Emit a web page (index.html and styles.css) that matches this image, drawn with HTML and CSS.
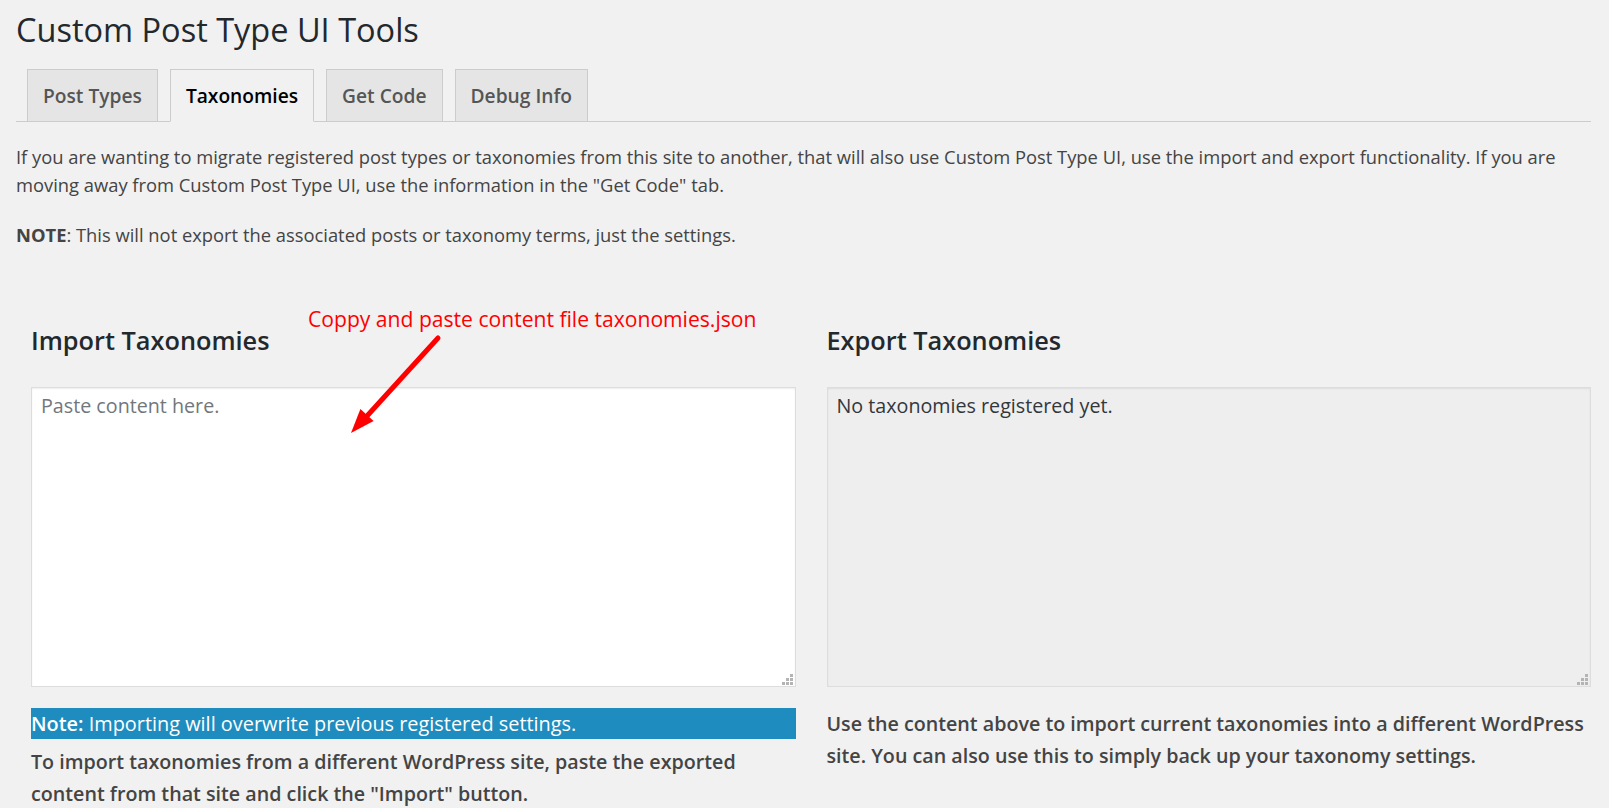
FILE: index.html
```html
<!DOCTYPE html>
<html lang="en">
<head>
<meta charset="utf-8">
<title>Custom Post Type UI Tools</title>
<link rel="stylesheet" href="styles.css">
</head>
<body>
<div class="wrap">
  <h1 class="page-title">Custom Post Type UI Tools</h1>
  <nav class="tabs">
    <a class="tab" href="#">Post Types</a>
    <a class="tab tab-active" href="#">Taxonomies</a>
    <a class="tab" href="#">Get Code</a>
    <a class="tab" href="#">Debug Info</a>
  </nav>
  <div class="intro">
    <p>If you are wanting to migrate registered post types or taxonomies from this site to another, that will also use Custom Post Type UI, use the import and export functionality. If you are moving away from Custom Post Type UI, use the information in the "Get Code" tab.</p>
    <p><strong>NOTE</strong>: This will not export the associated posts or taxonomy terms, just the settings.</p>
  </div>
  <div class="cols">
    <div class="col">
      <h2 class="col-title">Import Taxonomies</h2>
      <div class="field">
        <textarea class="box" placeholder="Paste content here."></textarea>
        <svg class="grip" width="11" height="11" viewBox="0 0 11 11"><rect x="8" y="0" width="3" height="3"/><rect x="4" y="4" width="3" height="3"/><rect x="8" y="4" width="3" height="3"/><rect x="0" y="8" width="3" height="3"/><rect x="4" y="8" width="3" height="3"/><rect x="8" y="8" width="3" height="3"/></svg>
      </div>
      <p class="highlight"><strong>Note:</strong> Importing will overwrite previous registered settings.</p>
      <p class="desc desc-import"><strong>To import taxonomies from a different WordPress site, paste the exported content from that site and click the "Import" button.</strong></p>
    </div>
    <div class="col">
      <h2 class="col-title">Export Taxonomies</h2>
      <div class="field">
        <textarea class="box box-readonly" readonly>No taxonomies registered yet.</textarea>
        <svg class="grip" width="11" height="11" viewBox="0 0 11 11"><rect x="8" y="0" width="3" height="3"/><rect x="4" y="4" width="3" height="3"/><rect x="8" y="4" width="3" height="3"/><rect x="0" y="8" width="3" height="3"/><rect x="4" y="8" width="3" height="3"/><rect x="8" y="8" width="3" height="3"/></svg>
      </div>
      <p class="desc desc-export"><strong>Use the content above to import current taxonomies into a different WordPress site. You can also use this to simply back up your taxonomy settings.</strong></p>
    </div>
  </div>
  <div class="annotation">Coppy and paste content file taxonomies.json</div>
  <svg class="arrow" width="110" height="110" viewBox="0 0 110 110">
    <line x1="98" y1="8" x2="27" y2="86" stroke="#ff0000" stroke-width="5" stroke-linecap="round"/>
    <polygon points="11,103 33.6,91 20.4,79" fill="#ff0000"/>
  </svg>
</div>
</body>
</html>
```
FILE: styles.css
```css
* { box-sizing: border-box; }

html, body {
  margin: 0;
  padding: 0;
  background: #f1f1f1;
}

body {
  font-family: "Open Sans", "Noto Sans", sans-serif;
  color: #444;
  font-size: 18.35px;
}

.wrap {
  position: relative;
  padding: 10px 18px 0 16px;
  min-height: 808px;
}

.page-title {
  margin: 0;
  font-size: 32.5px;
  line-height: 40px;
  font-weight: 400;
  color: #23282d;
}

.tabs {
  display: flex;
  gap: 12px;
  margin-top: 19px;
  padding-left: 11px;
  border-bottom: 1px solid #ccc;
}

.tab {
  display: flex;
  align-items: center;
  height: 53px;
  margin-bottom: -1px;
  padding: 0 15px;
  border: 1px solid #ccc;
  background: #e5e5e5;
  color: #555;
  font-size: 19.2px;
  font-weight: 600;
  text-decoration: none;
}

.tab-active {
  background: #f1f1f1;
  border-bottom-color: #f1f1f1;
  color: #000;
}

.intro p {
  margin: 20.6px 0;
  line-height: 28.7px;
}

.intro strong { font-weight: 700; }

.cols {
  display: grid;
  grid-template-columns: 1fr 1fr;
  column-gap: 31px;
  margin-top: 75.6px;
  padding-left: 15px;
}

.col-title {
  margin: 0 0 31px;
  font-size: 25.3px;
  line-height: 31px;
  font-weight: 600;
  color: #23282d;
}

.field {
  position: relative;
}

.box {
  display: block;
  width: 100%;
  height: 300px;
  margin: 0;
  padding: 4px 9px;
  border: 1px solid #ddd;
  box-shadow: inset 0 1px 2px rgba(0, 0, 0, 0.07);
  background: #fff;
  color: #32373c;
  font-family: "Open Sans", "Noto Sans", sans-serif;
  font-size: 19.7px;
  line-height: 28px;
  resize: none;
  outline: none;
}

.box::placeholder { color: #72777c; }

.box-readonly { background: #eee; }

.grip {
  position: absolute;
  right: 3px;
  bottom: 2px;
  fill: #b4b4b4;
}

.highlight {
  margin: 21px 0 0;
  background: #1e8cbe;
  color: #fff;
  font-size: 19.9px;
  line-height: 31px;
}

.highlight strong { font-weight: 600; }

.desc {
  font-size: 19.7px;
  line-height: 32px;
  color: #444;
}

.desc strong { font-weight: 600; }

.desc-import { margin: 7px 0 0; }

.desc-export { margin: 21px 0 0; }

.annotation {
  position: absolute;
  left: 308px;
  top: 306px;
  color: #ff0000;
  font-size: 21.1px;
  line-height: 26px;
  white-space: nowrap;
}

.arrow {
  position: absolute;
  left: 340px;
  top: 330px;
}
```
